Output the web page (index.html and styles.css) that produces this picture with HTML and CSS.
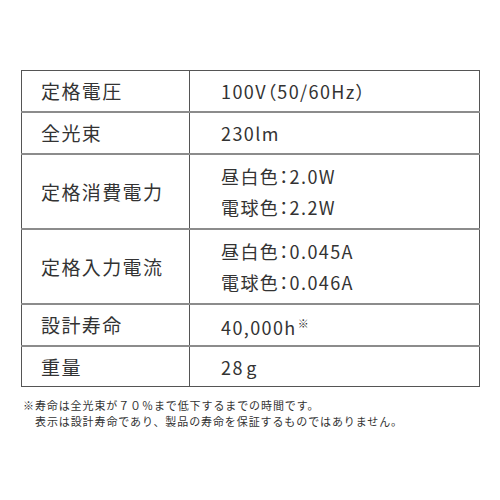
FILE: index.html
```html
<!DOCTYPE html>
<html lang="ja">
<head>
<meta charset="utf-8">
<link rel="stylesheet" href="styles.css">
</head>
<body>
<div class="page">
  <table class="spec">
    <tr class="r1"><th>定格電圧</th><td>100V（50/60Hz）</td></tr>
    <tr class="r1"><th>全光束</th><td>230lm</td></tr>
    <tr class="r2"><th>定格消費電力</th><td><div class="line">昼白色：2.0W</div><div class="line">電球色：2.2W</div></td></tr>
    <tr class="r2"><th>定格入力電流</th><td><div class="line">昼白色：0.045A</div><div class="line">電球色：0.046A</div></td></tr>
    <tr class="r1"><th>設計寿命</th><td>40,000h<span class="mark">※</span></td></tr>
    <tr class="r1 last"><th>重量</th><td>28&#8202;g</td></tr>
  </table>
  <div class="note">
    <p>※寿命は全光束が７０％まで低下するまでの時間です。</p>
    <p class="indent">表示は設計寿命であり、製品の寿命を保証するものではありません。</p>
  </div>
</div>
</body>
</html>
```
FILE: styles.css
```css
html, body {
  margin: 0;
  padding: 0;
  background: #fff;
}
body {
  font-family: "Noto Sans CJK JP", "Noto Sans", sans-serif;
  color: #333;
}
.page {
  padding: 70px 20px 0 21px;
}
.spec {
  width: 459px;
  border-collapse: collapse;
  border: 1px solid #555;
}
.spec th, .spec td {
  border-top: 2px solid #8c8c8c;
  text-align: left;
  vertical-align: middle;
  font-size: 18px;
  font-weight: 400;
  padding: 0;
  line-height: 26px;
}
.spec tr:first-child th, .spec tr:first-child td {
  border-top: 1px solid #555;
}
.spec th {
  width: 148px;
  padding-left: 19px;
  font-size: 19px;
  letter-spacing: 1.4px;
  border-right: 1px solid #555;
}
.spec td {
  padding-left: 31px;
  letter-spacing: 1.4px;
  font-feature-settings: "palt";
}
.r1 th, .r1 td { height: 40px; }
.r2 th, .r2 td { height: 73px; }
.last th, .last td { height: 39px; }
.line {
  line-height: 31px;
}
.mark {
  font-size: 11px;
  vertical-align: 7px;
  margin-left: 1px;
}
.note {
  padding: 10px 0 0 2px;
  font-size: 11px;
  letter-spacing: 0.9px;
  line-height: 16px;
  color: #333;
}
.note p {
  margin: 0;
}
.note .indent {
  padding-left: 12px;
}
```
